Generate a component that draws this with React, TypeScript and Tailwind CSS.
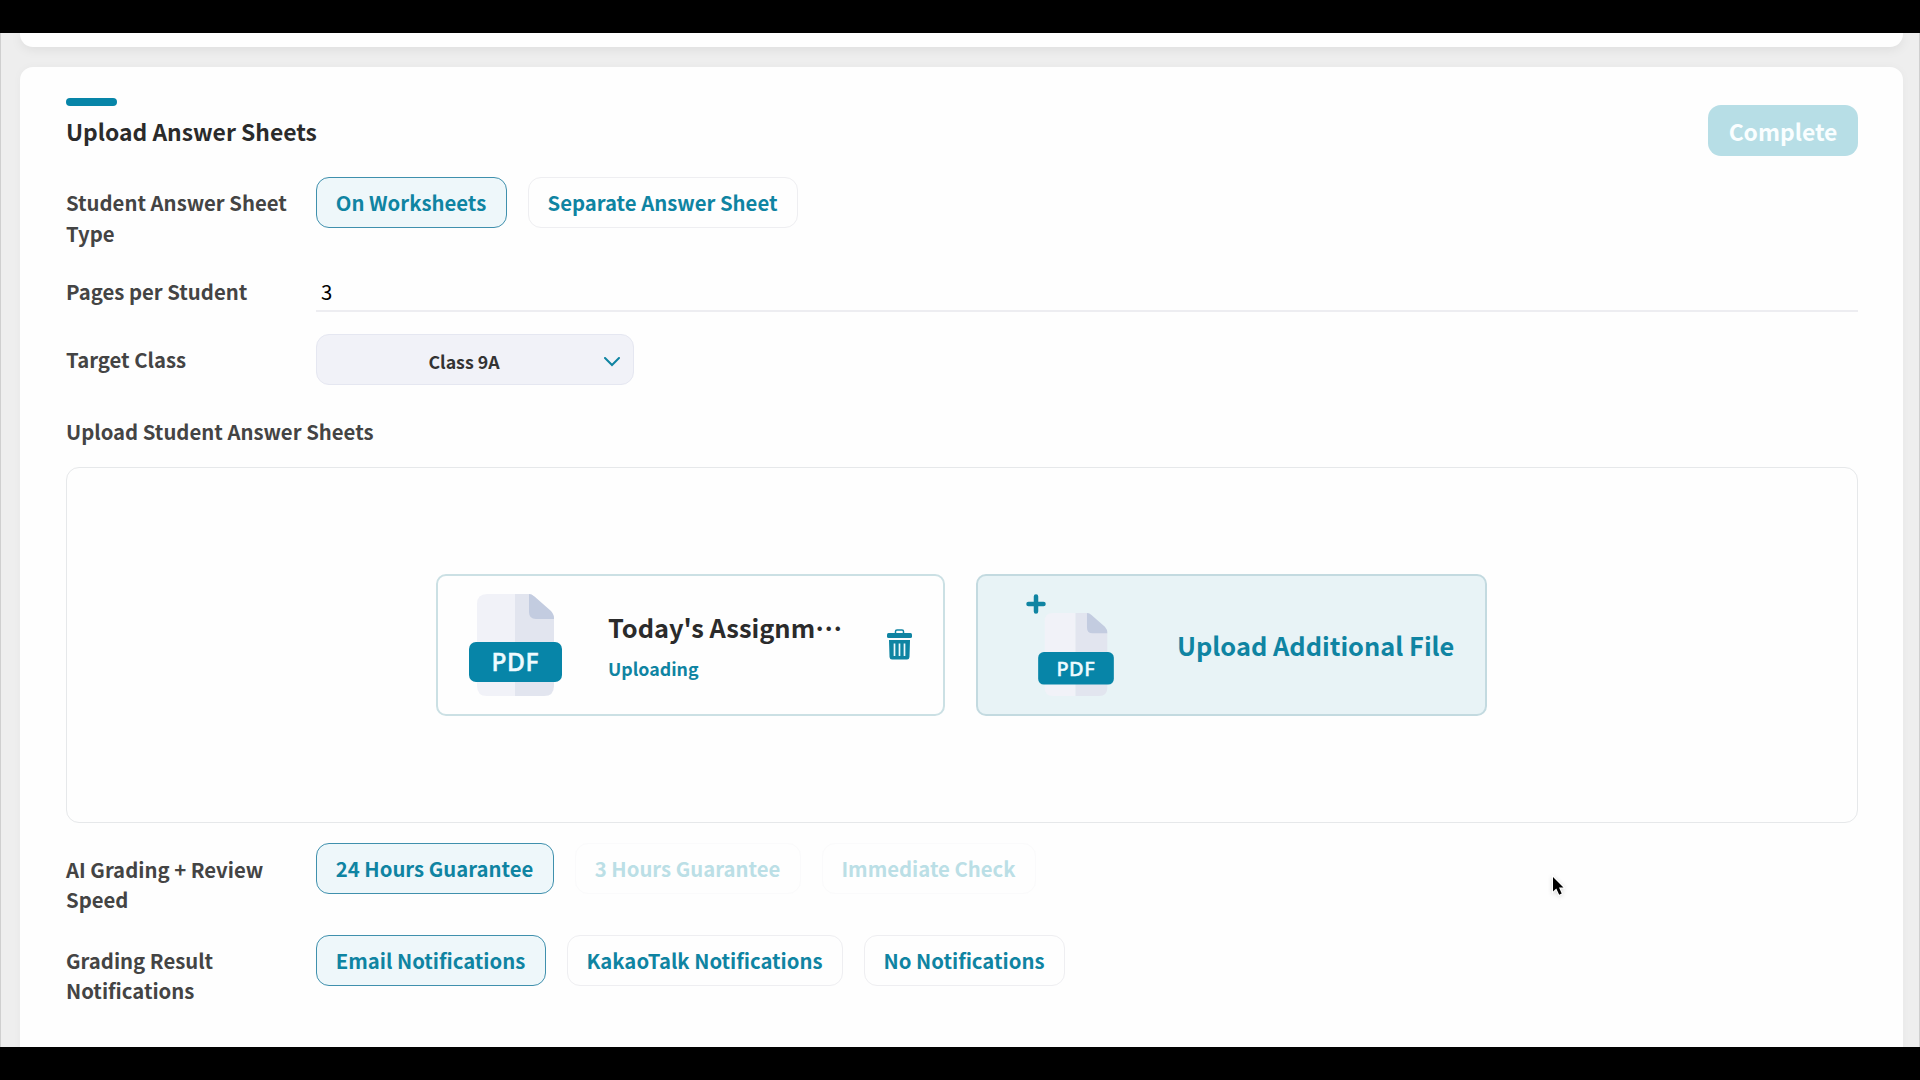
import React from 'react';
import clsx from 'clsx';

interface OptionButtonProps {
  label: string;
  width: string;
  selected?: boolean;
  disabled?: boolean;
}

function OptionButton({ label, width, selected = false, disabled = false }: OptionButtonProps) {
  return (
    <button
      disabled={disabled}
      className={clsx(
        'flex h-[51px] shrink-0 items-center justify-center whitespace-nowrap rounded-[13px] border pr-px text-[20.32px] font-bold',
        width,
        selected && 'border-[#3f90ad] bg-[#eef7fa] text-[#0f84a2]',
        !selected && !disabled && 'border-[#eeeef1] text-[#0f84a2]',
        disabled && 'border-[#fafafb] text-[#bbdfe6]',
      )}
    >
      {label}
    </button>
  );
}

interface FormRowProps {
  label: string;
  className?: string;
  children: React.ReactNode;
}

function FormRow({ label, className, children }: FormRowProps) {
  return (
    <div className={clsx('flex items-start', className)}>
      <div className="w-[250px] shrink-0 pt-[10px] pr-5 text-[20.32px] leading-[30.5px] font-bold text-[#444]">
        {label}
      </div>
      {children}
    </div>
  );
}

function PdfIcon({ className }: { className?: string }) {
  return (
    <svg viewBox="0 0 93 102" className={className}>
      <path d="M18 0H46V102H18Q8 102 8 92V10Q8 0 18 0Z" fill="#f1f2f8" />
      <path d="M46 0H62L85 22V92Q85 102 75 102H46Z" fill="#e2e5ef" />
      <path d="M60 0Q63 0 65.500 2.500L82 17Q85 20 85 25H67Q60 25 60 18Z" fill="#c3cce0" />
      <rect x="0" y="48" width="93" height="40" rx="7" fill="#0785a8" />
      <text
        x="46"
        y="77"
        textAnchor="middle"
        textLength="47"
        fontSize="24.500"
        fontWeight="500"
        fontFamily="'Noto Sans', sans-serif"
        fill="#effbff"
        stroke="#effbff"
        strokeWidth="0.500"
      >
        PDF
      </text>
    </svg>
  );
}

function TrashIcon() {
  return (
    <svg viewBox="0 0 25 31" className="h-[31px] w-[25px]">
      <path d="M8.500 4V2.500Q8.500 1 10 1H15Q16.500 1 16.500 2.500V4" fill="none" stroke="#0f84a2" strokeWidth="1.500" />
      <rect x="0" y="4" width="25" height="5" rx="1.500" fill="#0f84a2" />
      <path d="M2 11H23L22.500 28Q22.300 30.500 20 30.500H5Q2.700 30.500 2.500 28Z" fill="#0f84a2" />
      <path d="M7.500 14.500V27M12.500 14.500V27M17.500 14.500V27" stroke="#eef9fc" strokeWidth="1.700" />
    </svg>
  );
}

export default function App() {
  return (
    <div className="relative flex h-[1080px] w-[1920px] flex-col overflow-hidden bg-black py-[33px] font-['Noto_Sans_CJK_KR','Noto_Sans',sans-serif]">
      <div className="flex h-[1014px] flex-col overflow-hidden border-x border-[#cfcfcf] bg-[#eeeeee] pr-[16px] pl-[19px]">
        <div className="h-[14px] shrink-0 rounded-b-[13px] bg-[#fefefe] shadow-[0_2px_12px_rgba(0,0,0,0.08)]" />

        <section className="mt-5 h-[1100px] shrink-0 rounded-t-[13px] bg-[#fefefe] pt-[31px] pr-[45px] pl-[46px] shadow-[0_0_10px_rgba(0,0,0,0.03)]">
          <header className="flex h-[58px] items-start justify-between">
            <div>
              <div className="h-[7.5px] w-[51px] rounded-full bg-[#0785a8]" />
              <h1 className="mt-[7.5px] text-[22.86px] leading-[36px] font-bold text-[#2b2b2b]">
                Upload Answer Sheets
              </h1>
            </div>
            <button className="mt-[7px] h-[51px] w-[150px] rounded-[13px] bg-[#b7dee6] pt-px text-[22.86px] font-bold text-[#fafeff]">
              Complete
            </button>
          </header>

          <FormRow label="Student Answer Sheet Type" className="mt-[21px] h-[89px]">
            <div className="flex gap-[21px]">
              <OptionButton label="On Worksheets" width="w-[191px]" selected />
              <OptionButton label="Separate Answer Sheet" width="w-[270px]" />
            </div>
          </FormRow>

          <FormRow label="Pages per Student" className="h-[68px]">
            <div className="h-[46px] flex-1 border-b-2 border-[#ededf1] pt-[10px] pl-[5px] text-[20.32px] leading-[30.5px] text-black">
              3
            </div>
          </FormRow>

          <FormRow label="Target Class" className="h-[72px]">
            <div className="flex h-[51px] w-[318px] items-center rounded-[13px] border border-[#e5e7f1] bg-[#f1f2f8] pt-[3px] pr-[13px] pl-[7px]">
              <span className="flex-1 text-center text-[17.78px] font-bold text-[#333]">Class 9A</span>
              <svg viewBox="0 0 16 10" className="mt-px h-[10px] w-[16px]">
                <path d="M1 1L8 8L15 1" fill="none" stroke="#0f84a2" strokeWidth="2" strokeLinecap="round" />
              </svg>
            </div>
          </FormRow>

          <h2 className="pt-[10px] text-[20.32px] leading-[30.5px] font-bold text-[#444]">
            Upload Student Answer Sheets
          </h2>
          <div className="mt-5 flex h-[356px] items-center justify-center gap-[31px] rounded-[13px] border border-[#e6e8ea] pr-px">
            <div className="flex h-[142px] w-[509px] items-center rounded-[10px] border-2 border-[#cbe0e4] pr-[31px] pl-[31px]">
              <PdfIcon className="h-[102px] w-[93px]" />
              <div className="ml-[46px] flex-1 pt-[5px]">
                <div className="text-[25.4px] leading-[42px] font-bold whitespace-nowrap text-[#2b2b2b]">
                  Today's Assignm<span className="relative -top-[7px] text-[24px] leading-none">…</span>
                </div>
                <div className="text-[17.78px] leading-[40px] font-bold text-[#0f84a2]">Uploading</div>
              </div>
              <TrashIcon />
            </div>

            <button className="flex h-[142px] w-[511px] items-center rounded-[10px] border-2 border-[#c3dae0] bg-[#e8f3f6] pl-[48px]">
              <svg viewBox="0 0 20 20" className="mb-[82px] h-[20px] w-[20px]">
                <path d="M10 2.500V17.500M2.500 10H17.500" stroke="#0f84a2" strokeWidth="4.500" strokeLinecap="round" />
              </svg>
              <PdfIcon className="mt-[19px] -ml-[8px] h-[83px] w-[76px]" />
              <span className="ml-[63px] text-[25.4px] leading-[42px] font-bold whitespace-nowrap text-[#0f84a2]">
                Upload Additional File
              </span>
            </button>
          </div>

          <FormRow label="AI Grading + Review Speed" className="mt-5 h-[92px] [&>div:first-child]:pt-[11px]">
            <div className="flex gap-[21px]">
              <OptionButton label="24 Hours Guarantee" width="w-[238px]" selected />
              <OptionButton label="3 Hours Guarantee" width="w-[226px]" disabled />
              <OptionButton label="Immediate Check" width="w-[214px]" disabled />
            </div>
          </FormRow>

          <FormRow label="Grading Result Notifications">
            <div className="flex gap-[21px]">
              <OptionButton label="Email Notifications" width="w-[230px]" selected />
              <OptionButton label="KakaoTalk Notifications" width="w-[276px]" />
              <OptionButton label="No Notifications" width="w-[201px]" />
            </div>
          </FormRow>
        </section>
      </div>

      {/* mouse pointer */}
      <svg viewBox="0 0 14 22" className="absolute top-[875px] left-[1551px] h-[22px] w-[14px] drop-shadow-sm">
        <path
          d="M2 2V16.500L5.300 13.400L8.200 19.700L10.700 18.500L8 12.500H12.500Z"
          fill="#000"
          stroke="#fff"
          strokeWidth="2"
          paintOrder="stroke"
        />
      </svg>
    </div>
  );
}
